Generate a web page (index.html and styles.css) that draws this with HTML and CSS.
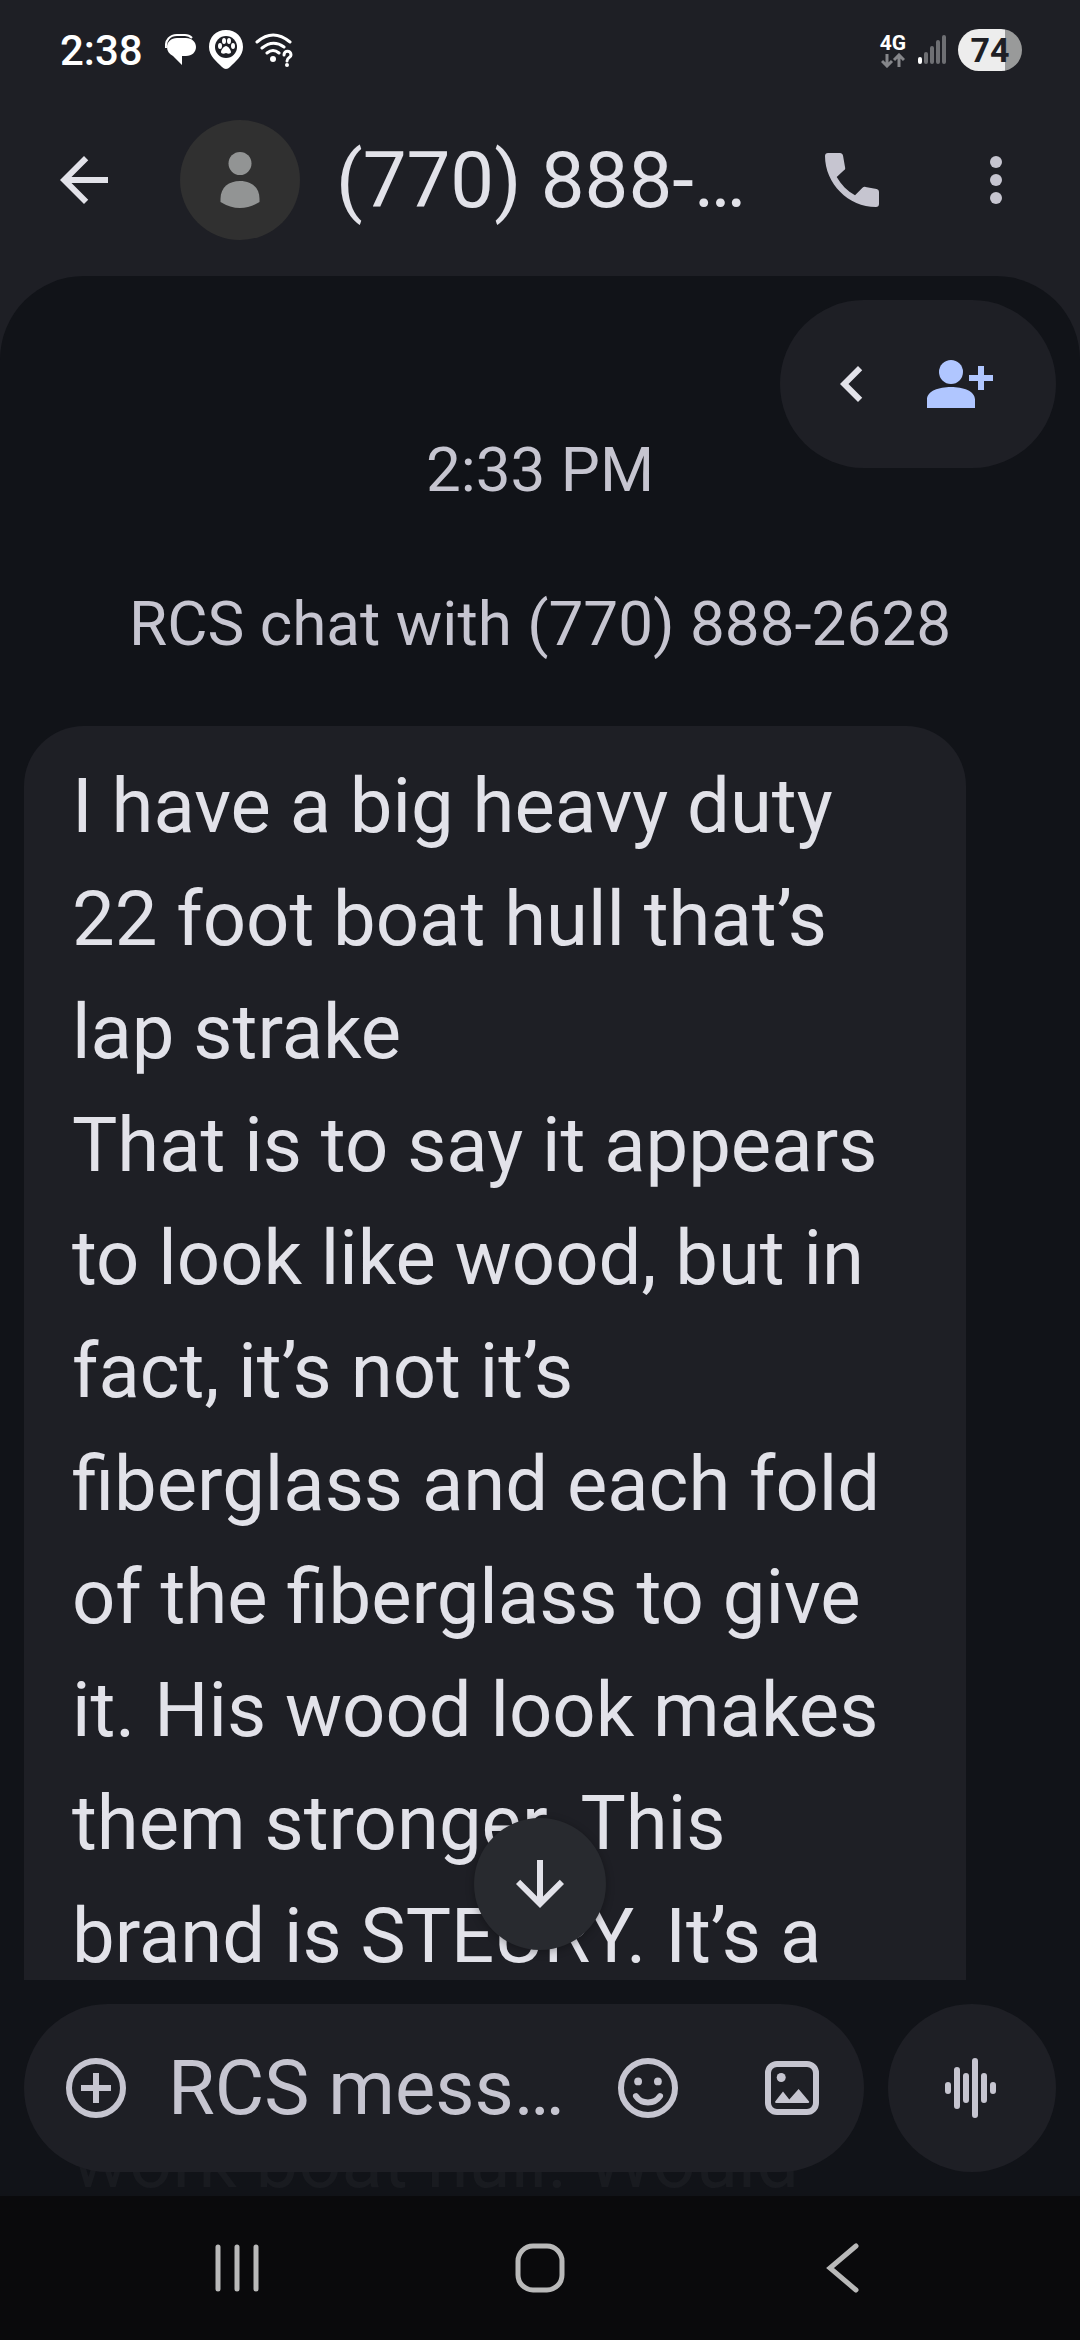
FILE: index.html
```
<!DOCTYPE html>
<html lang="en">
<head>
    <meta charset="UTF-8">
    <meta name="viewport" content="width=device-width, initial-scale=1.0">
    <title>Messages</title>
    <link rel="stylesheet" href="styles.css">
</head>
<body>

<div class="status-bar">
    <span class="clock">2:38</span>
    <svg class="status-icon" width="32" height="34" viewBox="0 0 32 34">
        <path d="M1 15C0 7 5 2 12 2h8c3 0 5 1 7 3" fill="none" stroke="#fff" stroke-width="2"/>
        <path d="M12 5h9c6 0 10 4 10 9s-4 9-10 9h-4v9l-9-9C4 21 2 18 2 14c0-5 4-9 10-9z" fill="#fff"/>
    </svg>
    <svg class="status-icon" width="36" height="40" viewBox="0 0 36 40">
        <path d="M18 0C8 0 1 7 1 17c0 9 8 15 13 20q4 4 8 0c5-5 13-11 13-20C35 7 28 0 18 0z" fill="#fff"/>
        <circle cx="18" cy="17" r="11" fill="#1e1f25"/>
        <g fill="#fff">
            <ellipse cx="12" cy="16" rx="2" ry="3"/>
            <ellipse cx="16" cy="11" rx="2" ry="3"/>
            <ellipse cx="21" cy="11" rx="2" ry="3"/>
            <ellipse cx="25" cy="16" rx="2" ry="3"/>
            <path d="M18 16c2 0 5 4 5 6s-3 2-5 1c-2 1-5 1-5-1s3-6 5-6z"/>
        </g>
    </svg>
    <svg class="status-icon" width="38" height="36" viewBox="0 0 38 36">
        <g fill="none" stroke="#fff" stroke-width="3" stroke-linecap="round">
            <path d="M2 10q16-14 33 0M7 16q11-9 22-1M12 21q6-5 12 0"/>
            <path d="M29 23c0-5 7-5 7 0 0 3-4 2-4 6"/>
        </g>
        <circle cx="18" cy="27" r="3" fill="#fff"/>
        <circle cx="32" cy="33" r="2" fill="#fff"/>
    </svg>
    <div class="status-right">
        <div class="network">
            <span>4G</span>
            <svg width="24" height="15" viewBox="0 0 24 15">
                <path d="M6 1v12M1 8l5 5 5-5M18 14V2M13 7l5-5 5 5" fill="none" stroke="#85868a" stroke-width="3"/>
            </svg>
        </div>
        <svg width="28" height="30" viewBox="0 0 28 30">
            <rect x="0" y="22" width="4" height="7" rx="2" fill="#fff"/>
            <path d="M8 19v8M14 13v14M20 7v20M26 2v25" stroke="#6e6f73" stroke-width="4" stroke-linecap="round"/>
        </svg>
        <span class="battery">74</span>
    </div>
</div>

<header class="chat-header">
    <button class="icon-btn light" aria-label="Back">
        <svg viewBox="0 0 24 24"><path d="M20 11H7.83l5.59-5.59L12 4l-8 8 8 8 1.41-1.41L7.83 13H20z"/></svg>
    </button>
    <svg class="avatar" viewBox="0 0 120 120">
        <circle cx="60" cy="60" r="60" fill="#303030"/>
        <circle cx="60" cy="43.5" r="11.5" fill="#929494"/>
        <path d="M40.5 79C40.5 67 49 61 60 61s19.5 6 19.5 18v3Q60 94 40.5 82z" fill="#929494"/>
    </svg>
    <h1>(770) 888-…</h1>
    <button class="icon-btn" aria-label="Call">
        <svg viewBox="0 0 24 24"><path d="M4 3h4c.5 0 .9.3 1 .8l.7 4c.1.4 0 .7-.3.9L6.9 11c1.5 2.6 3.5 4.6 6.1 6.1l2.5-2.5c.3-.3.6-.4 1-.3l3.7.7c.5.1.8.5.8 1v4c0 .6-.4 1-1 1C10.8 21 3 13.200 3 4c0-.6.4-1 1-1z"/></svg>
    </button>
    <button class="icon-btn menu-btn" aria-label="More options">
        <svg viewBox="0 0 24 24"><circle cx="12" cy="6" r="2"/><circle cx="12" cy="12" r="2"/><circle cx="12" cy="18" r="2"/></svg>
    </button>
</header>

<main class="chat">
    <div class="add-pill">
        <button class="icon-btn light" aria-label="Expand">
            <svg viewBox="0 0 24 24"><path d="M15.41 7.41L14 6l-6 6 6 6 1.41-1.41L10.83 12z"/></svg>
        </button>
        <button class="icon-btn blue" aria-label="Add contact">
            <svg viewBox="0 0 24 24"><circle cx="9" cy="8" r="4"/><path d="M1 20v-2.8C1 14.3 5 13 9 13s8 1.3 8 4.2V20zM18 6h2v3h3v2h-3v3h-2v-3h-3V9h3z"/></svg>
        </button>
    </div>

    <p class="note">2:33 PM</p>
    <p class="note">RCS chat with (770) 888-2628</p>

    <div class="bubble">
        I have a big heavy duty<br>
        22 foot boat hull that’s<br>
        lap strake<br>
        That is to say it appears<br>
        to look like wood, but in<br>
        fact, it’s not it’s<br>
        fiberglass and each fold<br>
        of the fiberglass to give<br>
        it. His wood look makes<br>
        them stronger. This<br>
        brand is STEURY. It’s a
    </div>

    <button class="scroll-btn" aria-label="Scroll to bottom">
        <svg viewBox="0 0 24 24"><path d="M11 4v12.200l-5.600-5.600L4 12l8 8 8-8-1.400-1.400-5.600 5.600V4z"/></svg>
    </button>
</main>

<div class="composer">
    <!-- end of the message, fading out under the bar -->
    <div class="faded-line">work boat hull. Would</div>
    <div class="input-pill">
        <button class="icon-btn" aria-label="Attach">
            <svg viewBox="0 0 24 24"><circle cx="12" cy="12" r="9" class="line"/><path d="M11 7h2v4h4v2h-4v4h-2v-4H7v-2h4z"/></svg>
        </button>
        <input type="text" placeholder="RCS mess…" aria-label="RCS message">
        <button class="icon-btn" aria-label="Emoji">
            <svg viewBox="0 0 24 24"><circle cx="12" cy="12" r="9" class="line"/><circle cx="8.7" cy="9.8" r="1.3"/><circle cx="15.3" cy="9.8" r="1.3"/><path d="M8 14.7c1.8 2.8 6.2 2.8 8 0" class="line smile"/></svg>
        </button>
        <button class="icon-btn gallery-btn" aria-label="Gallery">
            <svg viewBox="0 0 24 24"><rect x="4" y="4" width="16" height="16" rx="3" class="line"/><circle cx="8.4" cy="8.5" r="1.5"/><path d="M6.7 17c-.3 0-.4-.3-.3-.5L9 13.200l2.100 2.600 3.100-3.500 3.500 4.200c.1.200 0 .5-.3.500z"/></svg>
        </button>
    </div>
    <button class="voice-btn" aria-label="Record voice message">
        <svg viewBox="0 0 24 24"><path d="M4 11v2M7 6v12M10 8v8M13 3v18M16 8v8M19 11v2" class="line" stroke-linecap="round"/></svg>
    </button>
</div>

<nav class="nav-bar">
    <button aria-label="Recent apps">
        <svg viewBox="0 0 60 60"><path d="M11 9v42M30 9v42M49 9v42"/></svg>
    </button>
    <button aria-label="Home">
        <svg viewBox="0 0 60 60"><rect x="8" y="8" width="44" height="44" rx="15"/></svg>
    </button>
    <button aria-label="Back">
        <svg viewBox="0 0 60 60"><path d="M43 8L17 30l26 22"/></svg>
    </button>
</nav>

</body>
</html>
```
FILE: styles.css
```
* {
    box-sizing: border-box;
}
body {
    margin: 0;
    height: 100vh;
    display: flex;
    flex-direction: column;
    font-family: Roboto, "Liberation Sans", sans-serif;
    background-color: #1e1f25;
    color: #e2e2e9;
}
button {
    padding: 0;
    border: none;
    background: none;
    cursor: pointer;
}
svg {
    display: block;
}

/* Status bar */
.status-bar {
    display: flex;
    align-items: center;
    height: 84px;
    padding: 16px 58px 0 60px;
    color: white;
}
.clock {
    font-size: 42px;
    font-weight: 500;
    margin-right: 22px;
}
.status-icon {
    margin-right: 11px;
}
.status-right {
    display: flex;
    align-items: center;
    gap: 12px;
    margin-left: auto;
}
.network {
    display: flex;
    flex-direction: column;
    align-items: center;
    font-size: 21px;
    line-height: 20px;
    font-weight: 700;
}
.battery {
    width: 64px;
    height: 42px;
    border-radius: 21px;
    background: linear-gradient(to right, #ededed 74%, #999a9a 74%);
    color: #1e1f25;
    font-size: 34px;
    line-height: 42px;
    font-weight: 700;
    text-align: center;
}

/* Header */
.chat-header {
    display: flex;
    align-items: center;
    height: 192px;
    padding: 0 48px;
}
.avatar {
    width: 120px;
    height: 120px;
    margin: 0 36px 0 60px;
}
.chat-header h1 {
    flex: 1;
    margin: 0;
    font-size: 78px;
    font-weight: 400;
    white-space: nowrap;
}
.icon-btn {
    width: 72px;
    height: 72px;
    flex: none;
    color: #c6c5d0;
}
.icon-btn svg {
    fill: currentColor;
}
.menu-btn {
    margin-left: 72px;
}
.light {
    color: #e2e2e9;
}
.blue {
    color: #b0c6ff;
}
.line {
    fill: none;
    stroke: currentColor;
    stroke-width: 2;
}
.smile {
    stroke-linecap: round;
}

/* Conversation */
.chat {
    position: relative;
    flex: 1;
    min-height: 0;
    display: flex;
    flex-direction: column;
    padding: 142px 24px 0;
    border-radius: 84px 84px 0 0;
    background-color: #111318;
}
.add-pill {
    position: absolute;
    top: 24px;
    right: 24px;
    display: flex;
    align-items: center;
    gap: 36px;
    height: 168px;
    padding: 0 60px 0 36px;
    border-radius: 84px;
    background-color: #1e1f25;
}
.note {
    margin: 0 0 50px;
    font-size: 62px;
    line-height: 104px;
    text-align: center;
    color: #c6c5d0;
}
.bubble {
    flex: 1;
    min-height: 0;
    overflow: hidden;
    margin-right: 90px;
    padding: 24px 48px 0;
    border-radius: 60px 60px 0 0;
    background-color: #1e1f25;
    font-size: 76px;
    line-height: 113px;
    white-space: nowrap;
}
.scroll-btn {
    position: absolute;
    bottom: 30px;
    left: calc(50% - 66px);
    width: 132px;
    height: 132px;
    padding: 30px;
    border-radius: 50%;
    background-color: #282a2f;
    box-shadow: 0 2px 8px rgba(0, 0, 0, 0.3);
    color: #e2e2e9;
}
.scroll-btn svg {
    fill: currentColor;
}

/* Composer */
.composer {
    position: relative;
    display: flex;
    gap: 24px;
    padding: 24px;
    background-color: #111318;
}
.faded-line {
    position: absolute;
    left: 72px;
    bottom: -22px;
    font-size: 76px;
    line-height: 113px;
    color: #191b20;
}
.input-pill {
    position: relative;
    flex: 1;
    min-width: 0;
    display: flex;
    align-items: center;
    height: 168px;
    padding: 0 36px;
    border-radius: 84px;
    background-color: #1e1f25;
}
.input-pill input {
    flex: 1;
    min-width: 0;
    margin: 0 36px;
    padding: 0;
    border: none;
    outline: none;
    background: none;
    font-family: inherit;
    font-size: 76px;
    color: #e2e2e9;
}
.input-pill input::placeholder {
    color: #c6c5d0;
    opacity: 1;
}
.gallery-btn {
    margin-left: 72px;
}
.voice-btn {
    width: 168px;
    height: 168px;
    padding: 48px;
    border-radius: 50%;
    background-color: #1e1f25;
    color: #c6c5d0;
}

/* System navigation */
.nav-bar {
    display: flex;
    height: 144px;
    padding: 0 86px;
    background-color: #0a0a0c;
}
.nav-bar button {
    flex: 1;
    display: flex;
    align-items: center;
    justify-content: center;
}
.nav-bar svg {
    width: 60px;
    height: 60px;
    fill: none;
    stroke: #b9b9b9;
    stroke-width: 5;
    stroke-linecap: round;
}
```
